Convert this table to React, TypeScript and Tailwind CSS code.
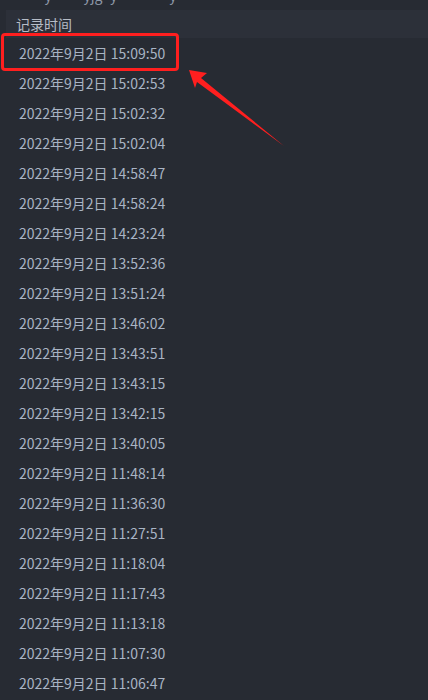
import React from "react";

const times = [
  "15:09:50","15:02:53","15:02:32","15:02:04","14:58:47","14:58:24","14:23:24","13:52:36","13:51:24","13:46:02","13:43:51","13:43:15","13:42:15","13:40:05","11:48:14","11:36:30","11:27:51","11:18:04","11:17:43","11:13:18","11:07:30","11:06:47",
];

export default function App() {
  return (
    <div
      className="relative w-[428px] h-[700px] overflow-hidden bg-[#272b33] text-[#a9b4c4]"
      style={{ fontFamily: '"Noto Sans CJK SC", "Noto Sans", sans-serif' }}
    >
      <div className="h-[10px] overflow-hidden relative">
        <div className="absolute left-[28px] top-[-12px] text-[14px] leading-[14px] text-[#8e98a8] whitespace-nowrap">
          <span className="opacity-0">ab</span>y<span className="opacity-0">abcd</span>yjg<span className="opacity-0">a</span>y<span className="opacity-0">abcdefg</span>y
        </div>
      </div>
      <div className="ml-[6px] h-[28px] bg-[#2c3039] flex items-center pl-[10px] text-[14px] text-[#b6bcc6]">
        记录时间
      </div>
      <div className="flex flex-col">
        {times.map((t) => (
          <div key={t} className="h-[30px] flex items-center pl-[19px] text-[14px] whitespace-nowrap">
            2022年9月2日 {t}
          </div>
        ))}
      </div>
      <div className="absolute left-[1px] top-[33px] w-[178px] h-[38px] border-[3px] border-[#ff1f1f] rounded-[4px]" />
      <svg className="absolute left-0 top-0" width="428" height="700">
        <polygon
          points="189,70 207,73 201,78 284,146 197,82 195,88"
          fill="#ff1f1f"
        />
      </svg>
    </div>
  );
}
